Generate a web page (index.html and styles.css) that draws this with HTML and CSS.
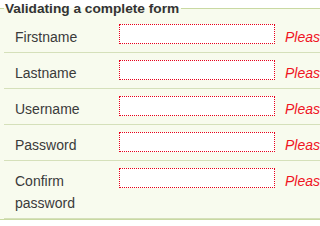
FILE: index.html
```html
<!DOCTYPE html>
<html lang="en">
<head>
    <meta charset="UTF-8">
    <meta name="viewport" content="width=device-width, initial-scale=1.0">
    <title>Validating a complete form</title>
    <link rel="stylesheet" href="styles.css">
</head>
<body>
    <form class="signup">
        <fieldset>
            <legend>Validating a complete form</legend>
            <ul class="rows">
                <li>
                    <label for="firstname">Firstname</label>
                    <input type="text" id="firstname">
                    <span class="error">Please enter your firstname</span>
                </li>
                <li>
                    <label for="lastname">Lastname</label>
                    <input type="text" id="lastname">
                    <span class="error">Please enter your lastname</span>
                </li>
                <li>
                    <label for="username">Username</label>
                    <input type="text" id="username">
                    <span class="error">Please enter a username</span>
                </li>
                <li>
                    <label for="password">Password</label>
                    <input type="password" id="password">
                    <span class="error">Please provide a password</span>
                </li>
                <li>
                    <label for="confirm">Confirm password</label>
                    <input type="password" id="confirm">
                    <span class="error">Please provide a password</span>
                </li>
            </ul>
        </fieldset>
    </form>
</body>
</html>
```

FILE: styles.css
```css
html, body {
    overflow: hidden;
}

body {
    margin: 0;
    font-family: "Liberation Sans", Arial, sans-serif;
    font-size: 14px;
    color: #3a3a3a;
    background: white;
}

fieldset {
    width: 600px;
    margin: 0 0 0 -20px;
    padding: 0 0 0 23px;
    border: 1px solid #c9d9a2;
    background: #f8fbee;
}

legend {
    padding: 0 2px 0 1px;
    font-size: 13.7px;
    font-weight: bold;
    line-height: 17px;
    color: #333;
}

.rows {
    list-style: none;
    margin: 0;
    padding: 0;
}

.rows li {
    display: flex;
    align-items: flex-start;
    box-sizing: border-box;
    min-height: 36px;
    padding: 7px 0 4px;
    border-bottom: 1px solid #d5e0ba;
}

.rows label {
    width: 115px;
    box-sizing: border-box;
    padding: 2px 0 0 11px;
    line-height: 22px;
}

.rows input {
    width: 156px;
    height: 20px;
    box-sizing: border-box;
    margin: 0;
    padding: 0 2px;
    border: 1px dotted #e8001a;
    background: white;
    font: inherit;
}

.error {
    margin-left: 10px;
    padding-top: 2px;
    line-height: 22px;
    font-style: italic;
    color: #f0141e;
    white-space: nowrap;
}
```
